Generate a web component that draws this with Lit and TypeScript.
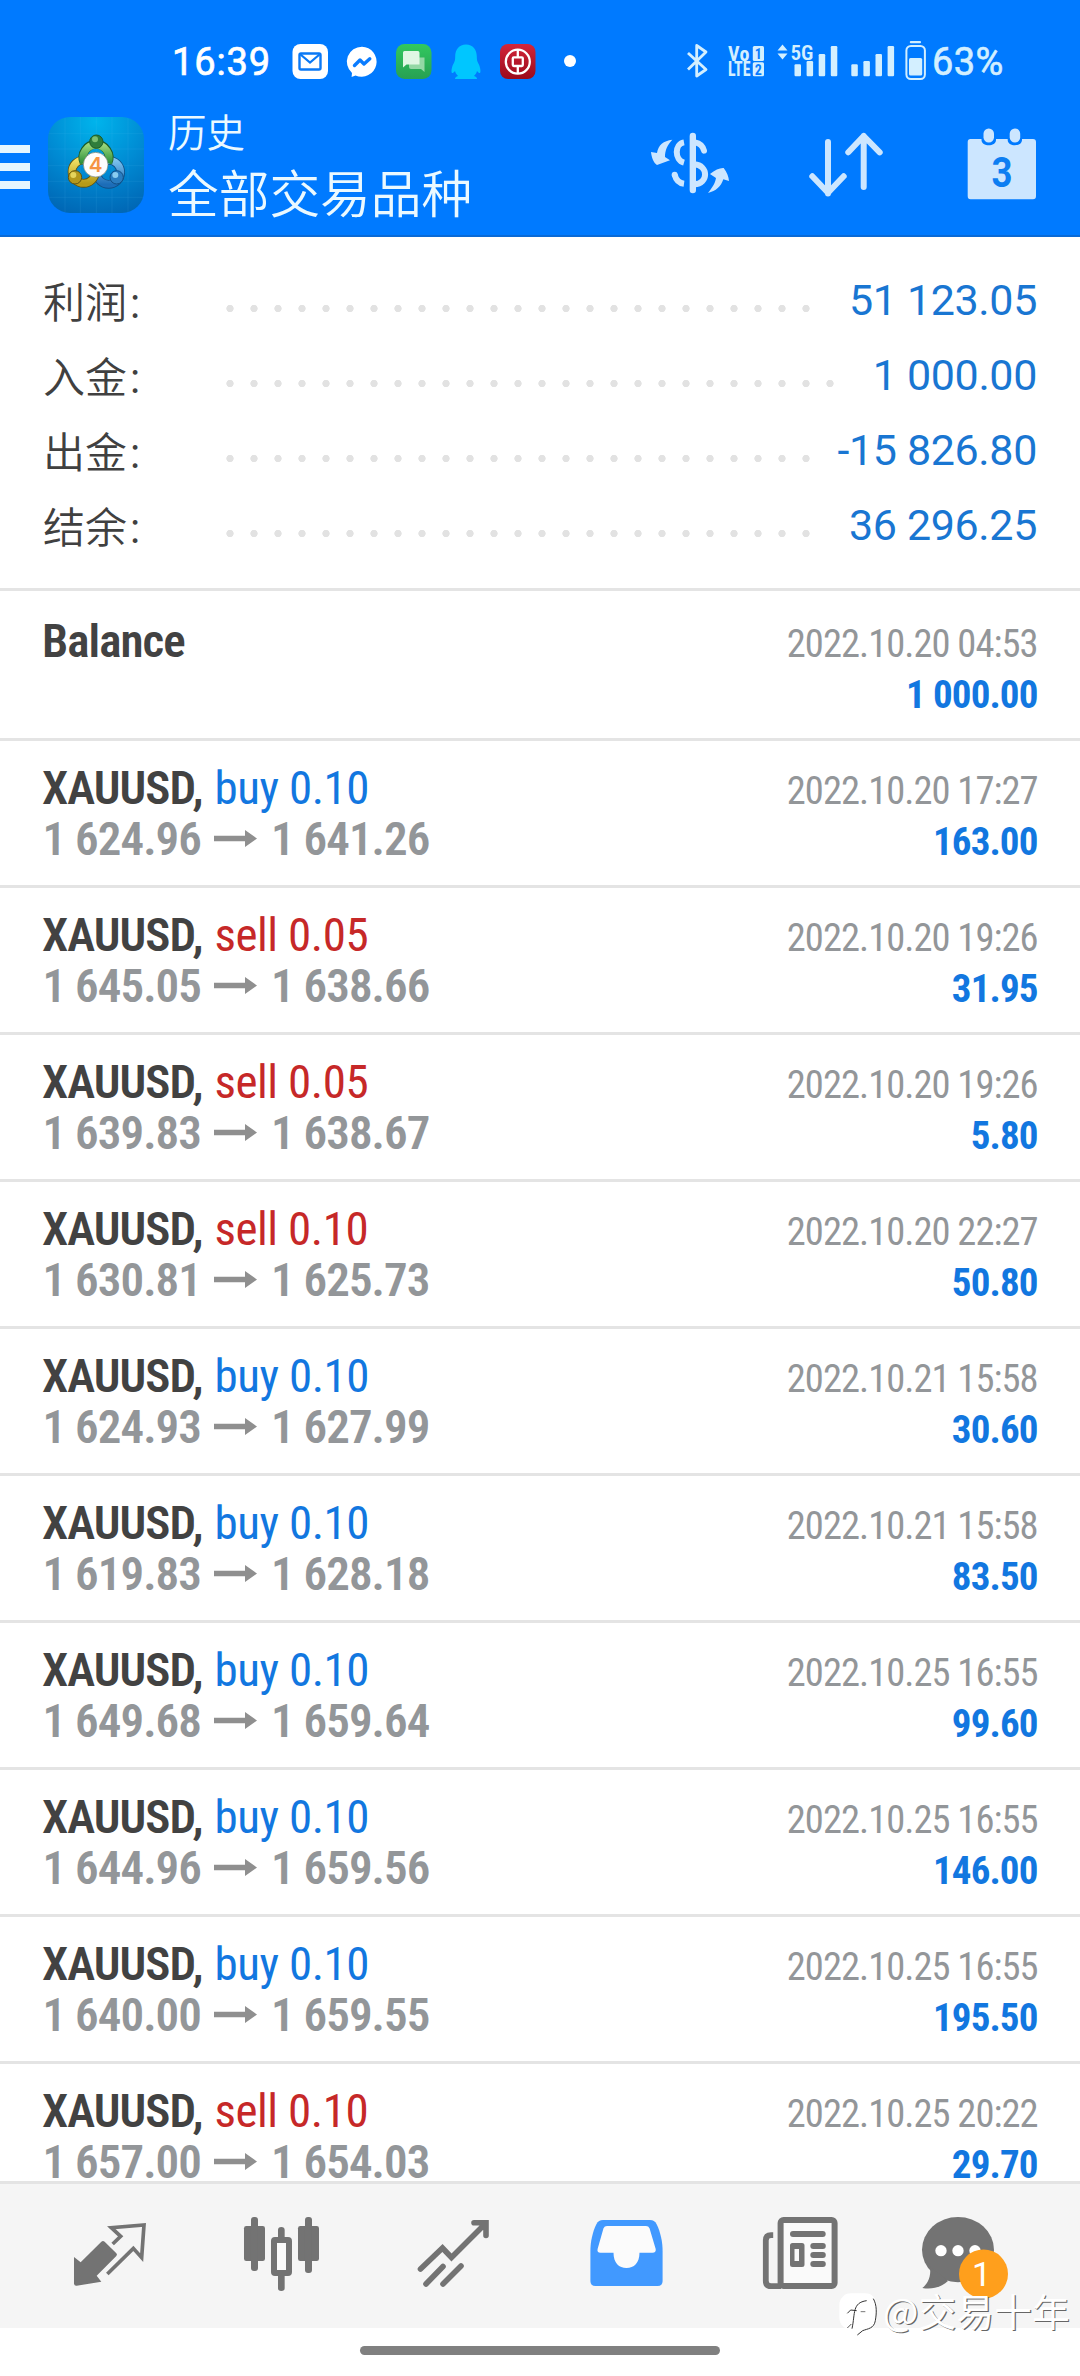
import { LitElement, html, css, svg } from "lit";
import { customElement, property } from "lit/decorators.js";
import { classMap } from "lit/directives/class-map.js";

interface SummaryLine {
  label: string;
  dots: number;
  value: string;
}

interface Deal {
  side?: "buy" | "sell";
  volume?: string;
  open?: string;
  close?: string;
  time: string;
  profit: string;
}

const SUMMARY: SummaryLine[] = [
  { label: "利润", dots: 25, value: "51 123.05" },
  { label: "入金", dots: 26, value: "1 000.00" },
  { label: "出金", dots: 25, value: "-15 826.80" },
  { label: "结余", dots: 25, value: "36 296.25" },
];

const DOT_PITCH = 24;

const DEALS: Deal[] = [
  { time: "2022.10.20 04:53", profit: "1 000.00" },
  { side: "buy", volume: "0.10", open: "1 624.96", close: "1 641.26", time: "2022.10.20 17:27", profit: "163.00" },
  { side: "sell", volume: "0.05", open: "1 645.05", close: "1 638.66", time: "2022.10.20 19:26", profit: "31.95" },
  { side: "sell", volume: "0.05", open: "1 639.83", close: "1 638.67", time: "2022.10.20 19:26", profit: "5.80" },
  { side: "sell", volume: "0.10", open: "1 630.81", close: "1 625.73", time: "2022.10.20 22:27", profit: "50.80" },
  { side: "buy", volume: "0.10", open: "1 624.93", close: "1 627.99", time: "2022.10.21 15:58", profit: "30.60" },
  { side: "buy", volume: "0.10", open: "1 619.83", close: "1 628.18", time: "2022.10.21 15:58", profit: "83.50" },
  { side: "buy", volume: "0.10", open: "1 649.68", close: "1 659.64", time: "2022.10.25 16:55", profit: "99.60" },
  { side: "buy", volume: "0.10", open: "1 644.96", close: "1 659.56", time: "2022.10.25 16:55", profit: "146.00" },
  { side: "buy", volume: "0.10", open: "1 640.00", close: "1 659.55", time: "2022.10.25 16:55", profit: "195.50" },
  { side: "sell", volume: "0.10", open: "1 657.00", close: "1 654.03", time: "2022.10.25 20:22", profit: "29.70" },
];

/* Notification icons, each in a tile 52 wide. */
const NOTIFICATIONS = [
  svg`<rect x="8.5" y="44" width="35.5" height="35" rx="8" fill="#fff"/>
      <rect x="15.5" y="53.5" width="21" height="16" rx="1.5" fill="none" stroke="#0a78f5" stroke-width="2.4"/>
      <path d="M16.5 54.5L26 62.5L35.5 54.5" fill="none" stroke="#0a78f5" stroke-width="2.2"/>`,
  svg`<path d="M26 46.7A15 15 0 1 1 19.5 75.4L15.6 77L16 73A15 15 0 0 1 26 46.7Z" fill="#fff"/>
      <path d="M18.5 65.5L24 60L28 64L33.8 58.8" fill="none" stroke="#0a7cff" stroke-width="3.4" stroke-linecap="round" stroke-linejoin="round"/>`,
  svg`<defs><linearGradient id="g" x1="0" y1="0" x2="0" y2="1"><stop offset="0" stop-color="#32c85f"/><stop offset="1" stop-color="#27a053"/></linearGradient></defs>
      <rect x="8" y="44" width="35.5" height="35" rx="8.5" fill="url(#g)"/>
      <path d="M21 57.5H36.5V72L33 69H23A2 2 0 0 1 21 67Z" fill="#93d8a5"/>
      <path d="M16.5 51H29A2 2 0 0 1 31.5 53V64.5H18.5L15 67.5V52.5A1.5 1.5 0 0 1 16.5 51Z" fill="#e0f7e4"/>`,
  svg`<path d="M26 44.5c-7 0-10.8 5-10.8 12 0 3-.3 4.5-1.3 6.5-2.4 4-2.9 9-1.9 10 1 .5 2-1 3-2 .5 2 1.5 3.500 3 5-2 .6-3 1.5-3 3h22c0-1.500-1-2.400-3-3 1.500-1.500 2.500-3 3-5 1 1 2 2.500 3 2 1-1 .5-6-1.900-10-1-2-1.300-3.500-1.300-6.500 0-7-3.800-12-10.800-12z" fill="#00c6ff"/>`,
  svg`<defs><linearGradient id="r" x1="0" y1="0" x2="0" y2="1"><stop offset="0" stop-color="#d3263a"/><stop offset="1" stop-color="#9b0a1c"/></linearGradient></defs>
      <rect x="8" y="44" width="35.5" height="35" rx="8" fill="url(#r)"/>
      <circle cx="25.8" cy="61.7" r="12" fill="none" stroke="#fff" stroke-width="2.3"/>
      <rect x="20.8" y="57.3" width="10" height="8.7" rx="1" fill="none" stroke="#fff" stroke-width="2.3"/>
      <path d="M25.8 49.5V57M25.8 66V73.5" stroke="#fff" stroke-width="2.3"/>`,
  svg`<circle cx="26" cy="61" r="6" fill="#fff"/>`,
];

const signalBars = (x: number) =>
  [64.3, 61, 54, 46].map((top, i) => svg`<rect x=${x + i * 12.1} y=${top} width="6.5" height=${76.2 - top} rx="1.2"/>`);

const ACTIONS = [
  svg`<g transform="translate(640 110) scale(.33333)" fill="none" stroke="#cce6ff" stroke-width="18">
        <path d="M158.5 78V240" stroke-width="19" stroke-linecap="round"/>
        <path d="M165 97Q187 101 192 122" stroke-linecap="round"/>
        <path d="M163 163C206 166 206 221 163 223"/>
        <path d="M132 97C103 102 103 150 132 158"/>
        <path d="M104 194Q110 218 132 221" stroke-linecap="butt"/>
        <circle cx="104" cy="194" r="9" fill="#cce6ff" stroke="none"/>
        <path d="M97 89C70 92 55 105 51 129L33 126C35 144 41 159 51 165L90 151L75 141C75 120 82 105 97 89Z" fill="#cce6ff" stroke="none"/>
        <path d="M204 249C223 225 226 215 228 204L210 192C225 180 240 173 251 174C261 187 266 200 267 213L250 208C243 230 228 243 204 249Z" fill="#cce6ff" stroke="none"/>
      </g>`,
  svg`<path d="M828 142V193.5M812.3 176.3L828 192.7L843.7 176.3M863.7 187V136M848.3 152.3L863.7 136L879.7 152.3" fill="none" stroke="#cce6ff" stroke-width="6" stroke-linecap="round" stroke-linejoin="round"/>`,
  svg`<path d="M970.5 139H981.5V140C981.5 147 996 147 996 140V139H1007.7V140C1007.7 147 1022 147 1022 140V139H1033Q1036 139 1036 142V196Q1036 199.3 1033 199.3H970.5Q967.7 199.3 967.7 196V142Q967.7 139 970.5 139Z" fill="#cce6ff"/>
      <rect x="983.5" y="128.5" width="10.5" height="14" rx="5.2" fill="#cce6ff"/>
      <rect x="1009.7" y="128.5" width="10.5" height="14" rx="5.2" fill="#cce6ff"/>
      <text x="1002" y="186.5" font-family="Roboto, sans-serif" font-weight="700" font-size="42" textLength="21" lengthAdjust="spacingAndGlyphs" text-anchor="middle" fill="#0d7ef2">3</text>`,
];

const TABS = [
  svg`<g transform="translate(60 2205) scale(.33333)">
        <path d="M42 156V236Q43 243 50 242L124 230L110 212L169 153Q173 149 169 145L134 110Q129 106 124 110L62 172Z"/>
        <path d="M158 117L182 94L154 68L252 60L245 158L220 130L142 207" fill="none" stroke="#737373" stroke-width="11"/>
      </g>`,
  svg`<g transform="translate(60 2205) scale(.33333)">
        <rect x="552" y="63" width="63" height="105" rx="7"/><rect x="573" y="36" width="21" height="162" rx="9"/>
        <rect x="714" y="63" width="63" height="105" rx="7"/><rect x="735" y="36" width="21" height="168" rx="9"/>
        <path d="M654 100V75Q654 66 664 66T674 75V100ZM654 210V250Q654 258 664 258T674 250V210Z"/>
        <rect x="642" y="105" width="45" height="99" rx="3" fill="#fafafa" stroke="#737373" stroke-width="18"/>
      </g>`,
  svg`<path d="M420.5 2269L442.5 2248L451.5 2257.5L485.5 2223.5M474 2222.7H486V2235.5M426 2284L443 2266.5M443 2284L461 2266" fill="none" stroke="#737373" stroke-width="5.6" stroke-linecap="round" stroke-linejoin="miter"/>`,
  svg`<path fill="#4199ff" d="M603 2220H650Q654.5 2220 656.5 2224C660.5 2232 662.6 2242 662.6 2251V2281Q662.6 2286 657.6 2286H595.4Q590.4 2286 590.4 2281V2251C590.4 2242 592.5 2232 596.5 2224Q598.5 2220 603 2220Z"/>
      <path fill="#fbfbfb" d="M607 2226H646Q648.5 2226 649.5 2228.3L655.7 2249Q656.3 2252.7 652.5 2252.7H639.5C639.5 2263 634 2268 626.5 2268S613.5 2263 613.5 2252.7H600.5Q596.7 2252.7 597.6 2249L603.5 2228.3Q604.5 2226 607 2226Z"/>`,
  svg`<path d="M773.2 2235.2H771Q765.8 2235.2 765.8 2240.5V2281Q765.8 2286.2 771 2286.2H781" fill="none" stroke="#737373" stroke-width="5.8"/>
      <rect x="780.6" y="2220" width="54" height="66" rx="3" fill="#fafafa" stroke="#737373" stroke-width="6"/>
      <rect x="790" y="2231" width="35.7" height="6" rx="3"/>
      <path fill-rule="evenodd" d="M792.5 2243H802Q804.5 2243 804.5 2245.5V2264.5Q804.5 2267 802 2267H792.5Q790 2267 790 2264.5V2245.5Q790 2243 792.5 2243ZM794.5 2249V2261H799V2249Z"/>
      <rect x="810.3" y="2243" width="15.5" height="6" rx="3"/><rect x="810.3" y="2252" width="15.5" height="6" rx="3"/><rect x="810.3" y="2261" width="15.5" height="6" rx="3"/>`,
  svg`<g transform="translate(830 2200) scale(.33333)">
        <ellipse cx="384" cy="149" rx="108" ry="98"/><path d="M300 200C304 232 292 252 277 264C312 270 338 258 354 243Z"/>
        <g fill="#fff"><circle cx="333" cy="152" r="17"/><circle cx="384" cy="152" r="17"/><circle cx="435" cy="152" r="17"/></g>
        <circle cx="460.5" cy="222" r="73.5" fill="#ff9f1c"/>
      </g>
      <text x="981.5" y="2286" font-family="Roboto, sans-serif" font-size="34" text-anchor="middle" fill="#fff">1</text>`,
];

@customElement("status-bar")
class StatusBar extends LitElement {
  static styles = css`
    :host { display: flex; height: 117px; color: #fff; font-family: Roboto, sans-serif; font-weight: 400; font-size: 38px; line-height: 125px; }
    svg { display: block; height: 117px; flex: none; }
    .clock { width: 112px; padding-left: 172px; letter-spacing: 0.9px; -webkit-text-stroke: 0.7px #fff; }
    .spacer { flex: 1; }
    .system { fill: #d3efff; }
    .level { width: 148px; color: #d3efff; letter-spacing: 0.4px; -webkit-text-stroke: 0.6px #d3efff; }
  `;
  render() {
    return html`
      <span class="clock">16:39</span>
      ${NOTIFICATIONS.map((n) => html`<svg width="52" viewBox="0 0 52 117">${n}</svg>`)}
      <span class="spacer"></span>
      <svg class="system" width="252" viewBox="680 0 252 117">
        <path d="M688 53L706 69.5L696.7 76V45.5L706 52L688 69.5" fill="none" stroke="#d3efff" stroke-width="2.8" stroke-linejoin="round"/>
        <g font-family="Roboto Condensed, sans-serif" font-weight="700" font-size="20">
          <text x="728" y="60.5" textLength="21.5">Vo</text>
          <text x="728" y="76" textLength="22.5" lengthAdjust="spacingAndGlyphs">LTE</text>
        </g>
        <rect x="752.8" y="46" width="11.2" height="15" rx="1.5"/><rect x="752.8" y="62.3" width="11.2" height="14" rx="1.5"/>
        <g font-family="Roboto Condensed, sans-serif" font-weight="700" font-size="14" text-anchor="middle" fill="#0a7cff">
          <text x="758.3" y="58.5">1</text><text x="758.4" y="74.5">2</text>
        </g>
        <path d="M777.5 50.5L782.5 44.5L787.5 50.500ZM777.5 53.5L782.5 59.5L787.5 53.5Z"/>
        <text x="790.5" y="59.5" font-family="Roboto Condensed, sans-serif" font-weight="600" font-size="20.5" textLength="23" lengthAdjust="spacingAndGlyphs">5G</text>
        ${signalBars(794.5)} ${signalBars(851.3)}
        <rect x="909.8" y="41" width="11.2" height="2.3" rx="1"/>
        <rect x="906.4" y="46" width="18.5" height="33" rx="4.5" fill="none" stroke="#d3efff" stroke-width="2"/>
        <rect x="909" y="58" width="13.2" height="17.5" rx="1.5"/>
      </svg>
      <span class="level">63%</span>
    `;
  }
}

@customElement("app-bar")
class AppBar extends LitElement {
  static styles = css`
    :host { display: flex; height: 118px; border-bottom: 2px solid #0a6ad6; color: #ebf9ff; font-family: "Noto Sans CJK SC", sans-serif; font-weight: 350; }
    svg { display: block; flex: none; }
    .menu { width: 30px; padding-top: 27.5px; }
    .menu i { display: block; height: 8.3px; margin-bottom: 9.9px; background: #e6f6ff; }
    .logo { margin-left: 18px; }
    .titles { flex: 1; padding-left: 24px; display: flex; flex-direction: column; white-space: nowrap; }
    .section { font-size: 38.5px; line-height: 27px; }
    .scope { font-size: 50.7px; line-height: 95px; }
  `;
  render() {
    return html`
      <div class="menu"><i></i><i></i><i></i></div>
      <svg class="logo" width="96" height="96" viewBox="24 36 288 288">
        <defs>
          <radialGradient id="bg" cx=".5" cy=".05" r="1"><stop offset="0" stop-color="#00b4ec"/><stop offset=".55" stop-color="#0089d2"/><stop offset="1" stop-color="#0066b4"/></radialGradient>
          <linearGradient id="gr" x1="0" y1="0" x2="0" y2="1"><stop offset="0" stop-color="#9bd67a"/><stop offset="1" stop-color="#2c8f3b"/></linearGradient>
          <linearGradient id="ye" x1="0" y1="0" x2="0" y2="1"><stop offset="0" stop-color="#f0e064"/><stop offset="1" stop-color="#b59a18"/></linearGradient>
          <linearGradient id="bl" x1="0" y1="0" x2="0" y2="1"><stop offset="0" stop-color="#7cc2ee"/><stop offset="1" stop-color="#1c6db8"/></linearGradient>
          <clipPath id="c"><rect x="24" y="36" width="288" height="288" rx="66"/></clipPath>
        </defs>
        <g clip-path="url(#c)">
          <rect x="24" y="36" width="288" height="288" fill="url(#bg)"/>
          <path d="M24 86H312M24 132H312M24 182H312M24 229H312M24 277H312M75 36V324M121 36V324M169 36V324M216 36V324M264 36V324" stroke="#5fc6f2" stroke-opacity=".16" stroke-width="2"/>
        </g>
        <circle cx="206" cy="202" r="36" fill="none" stroke="#114f86" stroke-width="26"/>
        <circle cx="206" cy="202" r="36" fill="none" stroke="url(#bl)" stroke-width="21"/>
        <circle cx="131" cy="200" r="35" fill="none" stroke="#5e5210" stroke-width="26"/>
        <circle cx="131" cy="200" r="35" fill="none" stroke="url(#ye)" stroke-width="21"/>
        <path d="M132 172A39 39 0 1 1 204 172" fill="none" stroke="#1d5c28" stroke-width="27"/>
        <path d="M132 174A39 39 0 1 1 204 174" fill="none" stroke="url(#gr)" stroke-width="22"/>
        <circle cx="169" cy="110" r="20" fill="#2f7d3c" stroke="#1d5c28" stroke-width="3"/><circle cx="165" cy="103" r="9" fill="#7cbf73"/>
        <circle cx="105" cy="217" r="20" fill="#b3981c" stroke="#5e5210" stroke-width="3"/><circle cx="100" cy="210" r="9" fill="#e5d45c"/>
        <circle cx="230" cy="217" r="20" fill="#2a7dc0" stroke="#114f86" stroke-width="3"/><circle cx="226" cy="210" r="9" fill="#8accf0"/>
        <circle cx="167" cy="179" r="37" fill="#fdfdfd" stroke="#6f7d70" stroke-width="2"/>
        <text x="167" y="201" font-family="Inter, sans-serif" font-weight="600" font-size="62" text-anchor="middle" fill="#f59444">4</text>
      </svg>
      <div class="titles"><span class="section">历史</span><span class="scope">全部交易品种</span></div>
      ${ACTIONS.map((a, i) => html`<svg width="156" height="118" viewBox="${612 + i * 156} 117 156 118">${a}</svg>`)}
    `;
  }
}

@customElement("account-summary")
class AccountSummary extends LitElement {
  static styles = css`
    :host { display: block; padding: 26px 43px 25px 43px; border-bottom: 3px solid #e4e4e4; }
    .line { display: flex; align-items: center; height: 75px; }
    .label { width: 175px; height: 75px; font: 350 42px/73px "Noto Sans CJK SC", sans-serif; color: #404040; }
    .colon { font-family: Roboto, sans-serif; font-weight: 400; margin-left: 3px; }
    .leader { height: 75px; background: radial-gradient(circle at 12px 45.5px, #e2e2e2 3.3px, transparent 4px) 0 0 / 24px 75px repeat-x; }
    .value { margin-left: auto; font: 400 43px/75px Roboto, sans-serif; letter-spacing: -0.35px; color: #1976d2; white-space: nowrap; }
  `;
  render() {
    return SUMMARY.map(
      (s) => html`<div class="line">
        <span class="label">${s.label}<span class="colon">:</span></span>
        <span class="leader" style="width:${s.dots * DOT_PITCH}px"></span>
        <span class="value">${s.value}</span>
      </div>`,
    );
  }
}

@customElement("deal-row")
class DealRow extends LitElement {
  @property({ attribute: false }) deal!: Deal;

  static styles = css`
    :host { display: block; border-bottom: 3px solid #e4e4e4; font-family: "Roboto Condensed", sans-serif; line-height: 51px; white-space: nowrap; }
    .row { display: grid; grid-template-columns: auto auto; grid-template-rows: 51px 51px; justify-content: space-between; align-items: baseline; height: 123px; padding: 21px 42.5px 0 42px; }
    .row.balance { padding-top: 24px; }
    .name { font-size: 47px; font-weight: 600; letter-spacing: -0.95px; color: #424242; }
    .side { margin-left: 2px; font-weight: 400; letter-spacing: -0.45px; }
    .buy { color: #1277e0; }
    .sell { color: #c62828; }
    .prices { display: flex; align-items: center; gap: 13.5px; min-height: 51px; padding-left: 0.5px; font-size: 47px; font-weight: 600; letter-spacing: -0.95px; color: #939699; }
    .time { text-align: right; font-size: 38.5px; letter-spacing: -0.97px; color: #939699; }
    .profit { text-align: right; font-size: 39px; font-weight: 700; letter-spacing: -0.9px; color: #1277e0; }
  `;
  render() {
    const d = this.deal;
    return html`<div class=${classMap({ row: true, balance: !d.side })}>
      <span class="name">${d.side ? html`XAUUSD, <span class="side ${d.side}">${d.side} ${d.volume}</span>` : "Balance"}</span>
      <span class="time">${d.time}</span>
      <span class="prices">${d.side
        ? html`<span>${d.open}</span><svg width="43" height="17" viewBox="0 0 43 17"><path d="M0 5.8H31V0L43 8.5L31 17V11.2H0Z" fill="#8f8f8f"/></svg><span>${d.close}</span>`
        : html`<span>&nbsp;</span>`}</span>
      <span class="profit">${d.profit}</span>
    </div>`;
  }
}

@customElement("tab-bar")
class TabBar extends LitElement {
  static styles = css`
    :host { display: flex; height: 144px; padding-left: 24px; background: #f5f5f5; border-top: 3px solid #e4e4e4; }
    svg { display: block; fill: #737373; }
  `;
  render() {
    return TABS.map((t, i) => html`<svg width="172" height="144" viewBox="${24 + i * 172} 2184 172 144">${t}</svg>`);
  }
}

@customElement("app-root")
class AppRoot extends LitElement {
  static styles = css`
    :host { display: flex; flex-direction: column; position: relative; width: 1080px; height: 2376px; overflow: hidden; background: #fff; }
    .header { flex: none; background: #007aff; }
    .list { flex: 1; min-height: 0; overflow: hidden; background: #fff; }
    .gesture { flex: none; height: 48px; display: flex; justify-content: center; align-items: flex-start; }
    .handle { width: 360px; height: 9px; margin-top: 18px; border-radius: 5px; background: #808080; }
    .mark { position: absolute; left: 838px; top: 2284px; display: flex; align-items: center; color: #fff; font: 400 37.5px/52px "Noto Sans CJK SC", sans-serif; letter-spacing: 0.3px; text-shadow: 1.2px 1.2px 0.6px #666; white-space: nowrap; }
    .mark svg { display: block; margin: 8px 5px 0 0; }
  `;
  render() {
    return html`
      <div class="header"><status-bar></status-bar><app-bar></app-bar></div>
      <account-summary></account-summary>
      <div class="list">${DEALS.map((d) => html`<deal-row .deal=${d}></deal-row>`)}</div>
      <tab-bar></tab-bar>
      <div class="gesture"><div class="handle"></div></div>
      <div class="mark">
        <svg width="40" height="44" viewBox="26 286 120 132">
          <rect x="30" y="290" width="112" height="108" rx="34" fill="#fff"/>
          <g fill="none" stroke="#333" stroke-width="3">
            <path d="M68 396C78 350 68 318 112 312"/><path d="M54 350L64 340L82 342"/><path d="M94 345H108" stroke-width="2"/>
            <path d="M132 306C143 325 142 350 138 372C134 396 115 396 100 402L84 415"/><path d="M54 394L66 382" stroke-width="2.5"/>
          </g>
        </svg>
        <span>@交易十年</span>
      </div>
    `;
  }
}
